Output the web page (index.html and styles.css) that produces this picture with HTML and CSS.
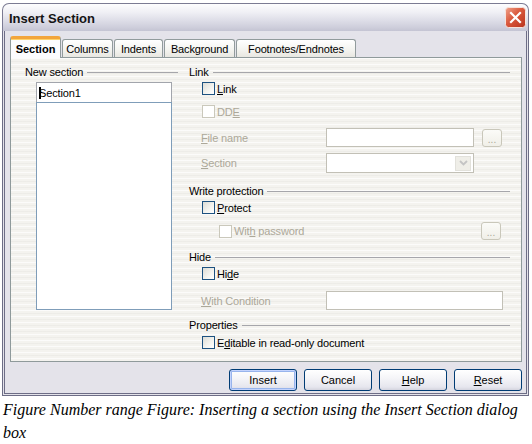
FILE: index.html
```html
<!DOCTYPE html>
<html>
<head>
<meta charset="utf-8">
<link rel="stylesheet" href="styles.css">
</head>
<body>
<div class="dialog">
  <div class="titlebar">
    <span class="title">Insert Section</span>
    <svg class="close" width="21" height="21" viewBox="0 0 21 21">
      <defs>
        <linearGradient id="rg" x1="0" y1="0" x2="1" y2="1">
          <stop offset="0" stop-color="#f0a48c"/>
          <stop offset="0.45" stop-color="#d9583c"/>
          <stop offset="1" stop-color="#b8321c"/>
        </linearGradient>
      </defs>
      <rect x="0.5" y="0.5" width="20" height="20" rx="3" fill="url(#rg)" stroke="#f6e3dc"/>
      <path d="M6 6 L15 15 M15 6 L6 15" stroke="#fff" stroke-width="2.2" stroke-linecap="square"/>
    </svg>
  </div>
  <div class="client">
    <div class="tabs">
      <div class="tab active">Section</div>
      <div class="tab t-col">Columns</div>
      <div class="tab t-ind">Indents</div>
      <div class="tab t-bg">Background</div>
      <div class="tab t-fn">Footnotes/Endnotes</div>
    </div>
    <div class="panel">
      <div class="col-left">
        <div class="hd"><span>New section</span></div>
        <div class="namefield"><span class="caret"></span>Section1</div>
        <div class="list"></div>
      </div>
      <div class="col-right">
        <div class="hd"><span>Link</span></div>
        <div class="cbrow m4"><span class="cb"></span><span><u>L</u>ink</span></div>
        <div class="cbrow m10 dis"><span class="cb"></span><span>DD<u>E</u></span></div>
        <div class="frow m10 h19">
          <span class="flabel dis"><u>F</u>ile name</span>
          <span class="field w148"></span>
          <span class="dots">...</span>
        </div>
        <div class="frow m6 h20">
          <span class="flabel dis"><u>S</u>ection</span>
          <span class="field combo w148"><span class="arrow"><svg width="9" height="6" viewBox="0 0 9 6"><path d="M1 1 L4.5 4.5 L8 1" fill="none" stroke="#c4c4c4" stroke-width="1.8"/></svg></span></span>
        </div>
        <div class="hd m11"><span>Write protection</span></div>
        <div class="cbrow m4"><span class="cb"></span><span><u>P</u>rotect</span></div>
        <div class="pwrow m8">
          <span class="cbrow sub dis"><span class="cb"></span><span>Wit<u>h</u> password</span></span>
          <span class="dots">...</span>
        </div>
        <div class="hd m10"><span>Hide</span></div>
        <div class="cbrow m4"><span class="cb"></span><span>Hi<u>d</u>e</span></div>
        <div class="frow m11 h19">
          <span class="flabel dis"><u>W</u>ith Condition</span>
          <span class="field w177"></span>
        </div>
        <div class="hd m8"><span>Properties</span></div>
        <div class="cbrow m5"><span class="cb"></span><span>E<u>d</u>itable in read-only document</span></div>
      </div>
    </div>
    <div class="buttons">
      <button class="btn default">Insert</button>
      <button class="btn">Cancel</button>
      <button class="btn"><u>H</u>elp</button>
      <button class="btn"><u>R</u>eset</button>
    </div>
  </div>
</div>
<p class="caption">Figure Number range Figure: Inserting a section using the Insert Section dialog box</p>
</body>
</html>
```

FILE: styles.css
```css
* { box-sizing: border-box; }
body {
  margin: 0;
  background: #ffffff;
  font-family: "Liberation Sans", Arial, sans-serif;
  font-size: 11px;
  letter-spacing: -0.15px;
  color: #000;
}
u { text-decoration: underline; text-underline-offset: 1px; }

.dialog {
  margin: 3px 0 0 2px;
  width: 527px;
}
.titlebar {
  height: 28px;
  display: flex;
  align-items: center;
  padding: 0 2px 0 6px;
  border: 1px solid #7b7b93;
  border-bottom: none;
  border-radius: 7px 7px 0 0;
  background: linear-gradient(#fdfdfe 0%, #f0f0f5 30%, #dedee8 60%, #cfcfdc 85%, #c4c4d3 100%);
}
.title {
  font-weight: bold;
  font-size: 13px;
  letter-spacing: 0;
  color: #141414;
  margin-top: 1px;
}
.close { margin-left: auto; display: block; }

.client {
  background: #e4e3ea;
  border: 3px double #6d6d86;
  border-top: none;
  padding: 5px 4px 2px 5px;
}

.tabs {
  display: flex;
  align-items: flex-end;
  height: 22px;
  margin-bottom: -1px;
}
.tab {
  height: 18px;
  margin-bottom: 1px;
  margin-right: 1px;
  display: flex;
  align-items: center;
  justify-content: center;
  border: 1px solid #919b9c;
  border-bottom: none;
  border-radius: 3px 3px 0 0;
  background: linear-gradient(#ffffff, #f3f3ef 60%, #e8e7e1);
  color: #000;
}
.t-col { width: 51px; }
.t-ind { width: 49px; }
.t-bg { width: 71px; }
.t-fn { width: 120px; }
.tab.active {
  position: relative;
  z-index: 1;
  width: 51px;
  height: 22px;
  margin-bottom: 0;
  padding-top: 1px;
  font-weight: bold;
  letter-spacing: 0;
  background: #fcfcfe;
  border-top: 3px solid #f2a53b;
  box-shadow: inset 0 1px 0 #ffd36b;
}

.panel {
  height: 305px;
  border: 1px solid #8f9a9b;
  background-color: #f4f3ef;
  background-image: repeating-linear-gradient(180deg, rgba(255,255,255,0.7) 0 1px, rgba(0,0,0,0) 1px 3px, rgba(225,224,218,0.35) 3px 4px, rgba(0,0,0,0) 4px 6px);
  display: flex;
  padding: 7px 11px 0 14px;
}
.col-left { width: 153px; }
.col-right { width: 321px; margin-left: 11px; }

.hd {
  display: flex;
  align-items: center;
  height: 13px;
  gap: 4px;
}
.hd::after {
  content: "";
  flex: 1;
  border-top: 1px solid #a6a6ab;
  margin-top: 1px;
}

.namefield {
  margin: 4px 0 0 11px;
  width: 136px;
  height: 21px;
  border: 1px solid #a2a5ac;
  background: #fff;
  display: flex;
  align-items: center;
  padding-left: 2px;
}
.caret {
  display: inline-block;
  width: 2px;
  height: 12px;
  background: #000;
  margin-right: -2px;
}
.list {
  margin: -1px 0 0 11px;
  width: 136px;
  height: 208px;
  border: 1px solid #7f9db9;
  background: #fff;
}

.m4 { margin-top: 4px; }
.m5 { margin-top: 5px; }
.m6 { margin-top: 6px; }
.m8 { margin-top: 8px; }
.m10 { margin-top: 10px; }
.m11 { margin-top: 11px; }
.h19 { height: 19px; }
.h20 { height: 20px; }

.cbrow {
  display: flex;
  align-items: center;
  gap: 2px;
  height: 13px;
  padding-left: 13px;
}
.cb {
  width: 13px;
  height: 13px;
  border: 1px solid #1c5180;
  background: linear-gradient(135deg, #dcdcd6 0%, #f4f4f0 60%, #ffffff 100%);
  flex: none;
}
.dis { color: #aca899; }
.dis .cb {
  border-color: #cac8bb;
  background: #fff;
}

.frow {
  display: flex;
  align-items: center;
}
.flabel {
  width: 137px;
  padding-left: 12px;
  flex: none;
}
.field {
  height: 100%;
  border: 1px solid #c2c0b6;
  background: #fff;
  flex: none;
}
.w148 { width: 148px; }
.w177 { width: 177px; }
.combo {
  display: flex;
  justify-content: flex-end;
  align-items: center;
  padding-right: 2px;
}
.arrow {
  width: 16px;
  height: 15px;
  background: #efeee8;
  border: 1px solid #e2e1db;
  display: flex;
  align-items: center;
  justify-content: center;
}
.dots {
  width: 20px;
  height: 18px;
  margin-left: 8px;
  border: 1px solid #c9c7ba;
  border-radius: 3px;
  background: linear-gradient(#fbfbf8, #f0efe8);
  color: #aca899;
  display: flex;
  align-items: flex-end;
  justify-content: center;
  padding-bottom: 2px;
  line-height: 9px;
  font-size: 10px;
  letter-spacing: 0;
  flex: none;
}
.pwrow {
  display: flex;
  align-items: center;
  height: 18px;
}
.pwrow .cbrow.sub { padding-left: 30px; }
.pwrow .dots { margin-left: auto; margin-right: 9px; }

.buttons {
  display: flex;
  justify-content: flex-end;
  gap: 7px;
  margin-top: 7px;
}
.btn {
  width: 68px;
  height: 22px;
  border: 1px solid #003c74;
  border-radius: 3px;
  background: linear-gradient(#ffffff 0%, #f5f5f8 40%, #e6e6ee 85%, #d4d4de 100%);
  font-family: "Liberation Sans", Arial, sans-serif;
  font-size: 11px;
  color: #000;
  padding: 0;
}
.btn.default {
  box-shadow: inset 0 0 0 1px #c3d3fd, inset 0 0 0 2px #98b4ec;
}

.caption {
  margin: 2px 0 0 3px;
  width: 522px;
  font-family: "Liberation Serif", "Times New Roman", serif;
  font-style: italic;
  font-size: 16px;
  line-height: 23px;
  letter-spacing: 0;
}
```
